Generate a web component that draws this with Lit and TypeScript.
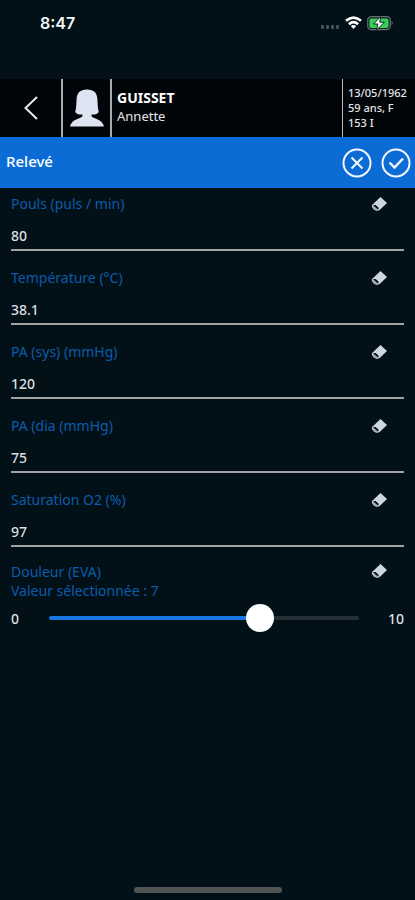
import { LitElement, html, css, svg } from "lit";
import { customElement, property, state } from "lit/decorators.js";
import { styleMap } from "lit/directives/style-map.js";

const eraser = svg`
  <svg width="18" height="18" viewBox="0 0 18 18" aria-hidden="true">
    <path d="M10.500 2 L17 8 L10.500 14.200 Q7 17 3.800 14.600 Q1.200 12.400 1.800 10.200 Z" fill="#ccd7e1"/>
    <path d="M2.400 10.800 Q3.600 9.400 6 11 Q8.800 13.200 8 15 Q6.400 16.200 4 14.400 Q2 12.600 2.400 10.800 Z" fill="#a3aeb7"/>
    <path d="M3 10.200 L5.600 10 L8.800 13 L8 14.400 Z" fill="#020b12"/>
  </svg>`;

@customElement("vital-field")
class VitalField extends LitElement {
  @property() label = "";
  @property() value = "";

  static styles = css`
    :host { display: block; }
    .field { height: 74px; padding: 0 11px; box-sizing: border-box; }
    .top { display: flex; justify-content: space-between; align-items: center; height: 31px; }
    .label { color: #0c5caa; font-size: 14px; line-height: 20px; }
    .erase { border: 0; background: none; padding: 0; margin-right: 16px; width: 18px; height: 18px; display: block; }
    .erase svg { display: block; }
    .input {
      display: block; width: 100%; height: 32px; box-sizing: border-box;
      padding: 2px 0 0; border: 0; border-bottom: 2px solid #a3a2a5; outline: 0;
      background: none; color: #dcdfe1; font: 500 14px/20px "Noto Sans", sans-serif;
    }
  `;

  render() {
    return html`
      <div class="field">
        <div class="top">
          <label class="label" for="value">${this.label}</label>
          <button class="erase" aria-label="Effacer" @click=${() => (this.value = "")}>${eraser}</button>
        </div>
        <input id="value" class="input" inputmode="decimal" .value=${this.value}
          @input=${(e: Event) => (this.value = (e.target as HTMLInputElement).value)} />
      </div>`;
  }
}

@customElement("app-root")
class AppRoot extends LitElement {
  @state() pain = 7;

  private fields = [
    { label: "Pouls (puls / min)", value: "80" },
    { label: "Température (°C)", value: "38.1" },
    { label: "PA (sys) (mmHg)", value: "120" },
    { label: "PA (dia (mmHg)", value: "75" },
    { label: "Saturation O2 (%)", value: "97" },
  ];

  static styles = css`
    :host {
      display: flex; flex-direction: column; min-height: 100vh; box-sizing: border-box;
      background: #021018; color: #fff; font-family: "Noto Sans", sans-serif; font-size: 14px;
    }
    button { border: 0; background: none; padding: 0; color: inherit; }
    svg { display: block; }
    .status { display: flex; align-items: center; height: 46px; margin-bottom: 33px; padding: 0 21px 0 40px; }
    .time { flex: 1; font: 600 16px/20px Inter, sans-serif; color: #f4f6f7; }
    .patient { display: flex; height: 58px; background: #010409; }
    .back { width: 61px; display: flex; align-items: center; justify-content: center; }
    .avatar { width: 47px; display: flex; justify-content: center; align-items: center; border: solid #a9abad; border-width: 0 2px; }
    .name { flex: 1; padding: 10px 0 0 5px; font-size: 13px; line-height: 18px; color: #e4e6e8; }
    .surname { font-size: 14px; font-weight: 700; color: #fff; }
    .info { width: 67px; padding: 6px 0 0 5px; border-left: 1px solid #b9bbbd; font-size: 11px; font-weight: 500; line-height: 15px; color: #e4e6e8; white-space: nowrap; }
    .bar { display: flex; align-items: center; height: 51px; padding: 0 4px 0 6px; background: #0c6cd6; }
    .title { flex: 1; margin: 0 0 4px; font-size: 15px; font-weight: 500; line-height: 20px; }
    .action { margin-left: 9px; }
    .pain { padding: 0 11px; }
    .top { display: flex; justify-content: space-between; }
    .label { display: block; color: #0c5caa; line-height: 19px; padding-top: 4px; }
    .label span { display: block; }
    .erase { align-self: flex-start; margin: 4px 16px 0 0; }
    .scale { display: flex; align-items: center; height: 36px; color: #dcdfe1; font-weight: 500; }
    .min { width: 38px; }
    .max { width: 45px; text-align: right; }
    .slider {
      appearance: none; flex: 1; min-width: 0; height: 28px; margin: 0; outline: 0;
      background: none;
    }
    .slider::-webkit-slider-runnable-track {
      height: 4px; border-radius: 2px;
      background: linear-gradient(to right, #1978e2 var(--fill), #253036 var(--fill));
    }
    .slider::-webkit-slider-thumb {
      appearance: none; width: 28px; height: 28px; margin-top: -12px; border-radius: 50%; background: #fff;
    }
    .home { width: 148px; height: 6px; margin: auto auto 7px; border-radius: 3px; background: #525355; }
  `;

  render() {
    return html`
      <div class="status">
        <div class="time">8:47</div>
        <svg width="74" height="18" viewBox="0 0 74 18" aria-hidden="true">
          <g fill="#465058">
            <rect x="1" y="11" width="3" height="4" rx="1"/><rect x="6" y="11" width="3" height="4" rx="1"/>
            <rect x="11" y="11" width="3" height="4" rx="1"/><rect x="16" y="11" width="3" height="4" rx="1"/>
          </g>
          <g fill="none" stroke="#fff" stroke-width="2.6">
            <path d="M26 6.8 Q33.5 0.4 41 6.8"/><path d="M28.9 10.2 Q33.5 6.2 38.1 10.2"/>
          </g>
          <path d="M30.8 12 Q33.5 9.8 36.2 12 L33.5 15 Z" fill="#fff"/>
          <rect x="47.7" y="2.700" width="22.6" height="13" rx="3.6" fill="#0b2418" stroke="#65706f" stroke-width="1.2"/>
          <rect x="49.4" y="4.400" width="19.2" height="9.600" rx="2" fill="#37cc5b"/>
          <path d="M71.6 7 Q74 9.2 71.6 11.4 Z" fill="#65706f"/>
          <path d="M60.6 2.600 L53.600 10 H57.800 L56.600 16 L64.400 8.2 H59.8 Z" fill="#fff" stroke="#0b2418" stroke-width="1"/>
        </svg>
      </div>
      <header class="patient">
        <button class="back" aria-label="Retour">
          <svg width="16" height="26" viewBox="0 0 16 26"><path d="M14 2 L2.5 13 L14 24" fill="none" stroke="#e8eaec" stroke-width="2"/></svg>
        </button>
        <div class="avatar">
          <svg width="36" height="38" viewBox="0 0 36 38" aria-hidden="true">
            <path d="M18 0.5 C25 0.5 28 4 28.4 10 C28.7 15 28.6 19 29.8 23 C28 25.6 25 25.8 22.6 25.4 V27.4 C25 29.6 33.5 30.2 35 37.5 H1 C2.500 30.2 11 29.600 13.400 27.400 V25.400 C11 25.800 8 25.600 6.200 23 C7.400 19 7.300 15 7.600 10 C8 4 11 0.500 18 0.500 Z" fill="#dfe4f2"/>
          </svg>
        </div>
        <div class="name"><div class="surname">GUISSET</div><div>Annette</div></div>
        <div class="info"><div>13/05/1962</div><div>59 ans, F</div><div>153 I</div></div>
      </header>
      <div class="bar">
        <h1 class="title">Relevé</h1>
        <button class="action" aria-label="Annuler">
          <svg width="30" height="30" viewBox="0 0 30 30" fill="none" stroke="#f4f8ff" stroke-width="2">
            <circle cx="15" cy="15" r="13.500"/><path d="M9.500 9.500 L20.500 20.500 M20.500 9.500 L9.500 20.500"/>
          </svg>
        </button>
        <button class="action" aria-label="Valider">
          <svg width="30" height="30" viewBox="0 0 30 30" fill="none" stroke="#f4f8ff" stroke-width="2">
            <circle cx="15" cy="15" r="13.500"/><path d="M8.500 14.500 L13.500 19.500 L22 10.500" stroke-width="2.400"/>
          </svg>
        </button>
      </div>
      <main>
        ${this.fields.map((f) => html`<vital-field .label=${f.label} .value=${f.value}></vital-field>`)}
        <section class="pain">
          <div class="top">
            <label class="label" for="pain"><span>Douleur (EVA)</span><span>Valeur sélectionnée : ${this.pain}</span></label>
            <button class="erase" aria-label="Effacer" @click=${() => (this.pain = 0)}>${eraser}</button>
          </div>
          <div class="scale">
            <span class="min">0</span>
            <input id="pain" class="slider" type="range" min="0" max="10" .value=${String(this.pain)}
              style=${styleMap({ "--fill": `${this.pain * 10}%` })}
              @input=${(e: Event) => (this.pain = Number((e.target as HTMLInputElement).value))} />
            <span class="max">10</span>
          </div>
        </section>
      </main>
      <div class="home"></div>`;
  }
}
